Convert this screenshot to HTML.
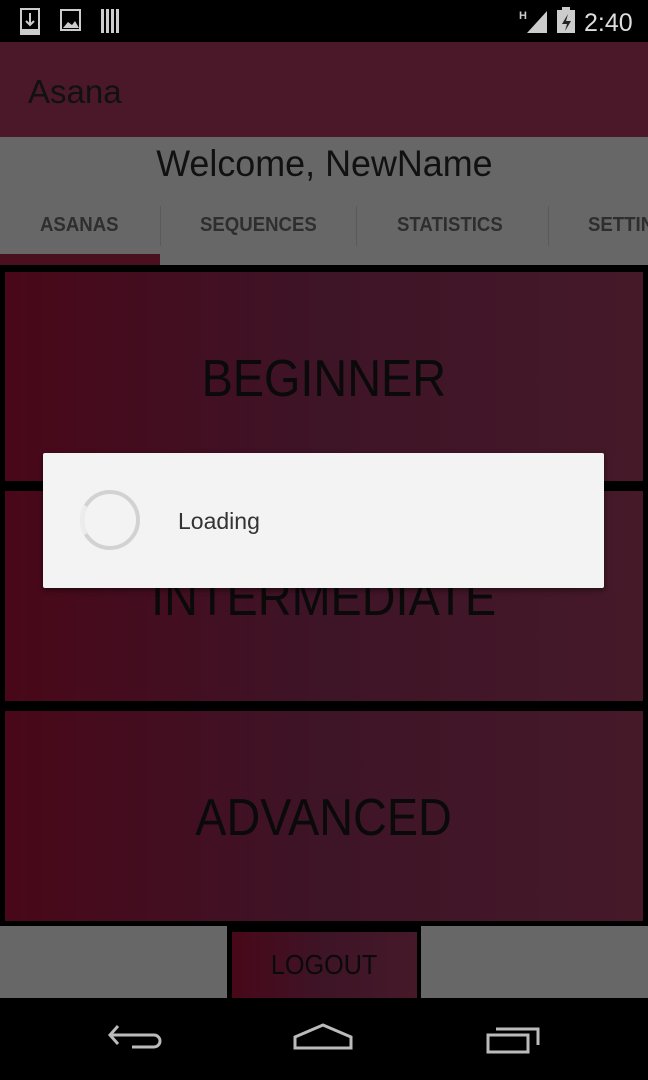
<!DOCTYPE html>
<html><head><meta charset="utf-8"><style>
*{margin:0;padding:0;box-sizing:border-box}
html,body{overflow:hidden}
body{width:648px;height:1080px;background:#000;position:relative;overflow:hidden;font-family:"Liberation Sans",sans-serif}
.a{position:absolute}
.tile{position:absolute;left:5px;width:638px;background:linear-gradient(90deg,#480819 0%,#3e1427 50%,#451928 100%);display:flex;align-items:center;justify-content:center}
.tile span{font-size:52px;color:#0a0a0a;transform:scaleX(.9);display:inline-block}
.tab{position:absolute;top:214px;font-size:20px;font-weight:bold;color:#2e2e2e;transform:scaleX(.93);transform-origin:left;white-space:nowrap}
.div{position:absolute;top:206px;width:1px;height:40px;background:#5a5a5a}
</style></head><body>
<svg class="a" style="left:0;top:0" width="648" height="42">
<rect x="21" y="9" width="18" height="25" fill="none" stroke="#ccc" stroke-width="2"/><path d="M30 13v12M26 21l4 4 4-4" stroke="#ccc" stroke-width="2" fill="none"/><rect x="21" y="29" width="18" height="5" fill="#ccc"/>
<rect x="61" y="10" width="19" height="20" fill="none" stroke="#ccc" stroke-width="2"/><path d="M63 28l5-6 4 3 3-4 4 7z" fill="#ccc"/>
<g fill="#ccc"><rect x="101" y="9" width="3" height="24"/><rect x="106" y="9" width="3" height="24"/><rect x="111" y="9" width="3" height="24"/><rect x="116" y="9" width="3" height="24"/></g>
<text x="519" y="19" font-size="11" fill="#ccc" font-weight="bold">H</text>
<path d="M527 33L547 11V33z" fill="#ccc"/>
<rect x="557" y="10" width="18" height="23" fill="#ccc"/><rect x="562" y="7" width="8" height="4" fill="#ccc"/><path d="M568 14l-6 10h5l-2 7 6-10h-5z" fill="#222"/>
<text x="584" y="31" font-size="25" fill="#ddd">2:40</text>
</svg>
<div class="a" style="left:0;top:42px;width:648px;height:95px;background:#4a1828"></div>
<div class="a" style="left:28px;top:73px;font-size:33px;color:#111">Asana</div>
<div class="a" style="left:0;top:137px;width:648px;height:128px;background:#676767;overflow:hidden">
<div class="a" style="left:0;top:6px;width:648px;text-align:center;font-size:37px;color:#111"><span style="display:inline-block;transform:scaleX(.97)">Welcome, NewName</span></div>
<div style="position:absolute;left:0;top:-137px;width:648px;height:265px">
<div class="tab" style="left:40px">ASANAS</div>
<div class="tab" style="left:200px">SEQUENCES</div>
<div class="tab" style="left:397px">STATISTICS</div>
<div class="tab" style="left:588px">SETTINGS</div>
<div class="div" style="left:160px"></div><div class="div" style="left:356px"></div><div class="div" style="left:548px"></div>
<div class="a" style="left:0;top:254px;width:160px;height:11px;background:#4a1020"></div>
</div></div>
<div class="tile" style="top:272px;height:209px"><span style="margin-top:4px">BEGINNER</span></div>
<div class="tile" style="top:491px;height:210px"><span style="margin-top:4px">INTERMEDIATE</span></div>
<div class="tile" style="top:711px;height:210px"><span style="margin-top:4px">ADVANCED</span></div>
<div class="a" style="left:0;top:926px;width:227px;height:72px;background:#676767"></div>
<div class="a" style="left:421px;top:926px;width:227px;height:72px;background:#676767"></div>
<div class="tile" style="left:232px;width:185px;top:932px;height:66px"><span style="font-size:28px">LOGOUT</span></div>
<div class="a" style="left:43px;top:453px;width:561px;height:135px;background:#f3f3f3;border-radius:2px;box-shadow:0 2px 6px rgba(0,0,0,.5)"></div>
<svg class="a" style="left:76px;top:486px" width="70" height="70"><circle cx="34" cy="34" r="28" fill="none" stroke="#d2d2d2" stroke-width="4"/><path d="M10 20A28 28 0 0 0 10 48" stroke="#ececec" stroke-width="5" fill="none"/></svg>
<div class="a" style="left:178px;top:508px;font-size:23px;color:#333">Loading</div>
<svg class="a" style="left:0;top:998px" width="648" height="82">
<g fill="none" stroke="#bbb" stroke-width="3"><path d="M110 37h44a6 6 0 0 1 0 12h-22M118 28l-8 9 8 9"/><path d="M295 50V39l28-12 28 12v11z"/><rect x="488" y="37" width="40" height="17"/><path d="M496 31h42v16"/></g>
</svg>
</body></html>
